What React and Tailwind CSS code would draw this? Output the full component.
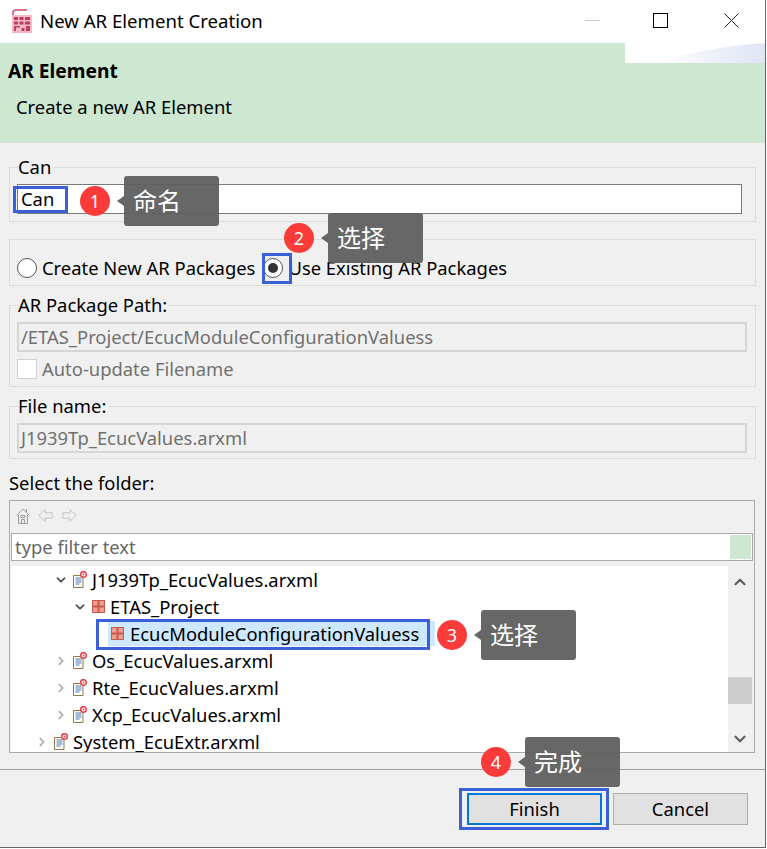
import React from 'react'
import { ChevronDown, ChevronRight, ChevronUp } from 'lucide-react'

const font = '"Noto Sans", "Noto Sans CJK SC", sans-serif'

function AppIcon() {
  return (
    <svg width="24" height="25" viewBox="0 0 24 25" className="shrink-0">
      <path d="M4 23V4q0-3 3-3h11" fill="none" stroke="#d9768e" strokeWidth="2" />
      <rect x="3" y="6" width="20" height="18" fill="#f3b9c6" />
      <path d="M5 8h4v3H5zM10.5 8h4v3h-4zM16 8h5v3h-5zM5 12.5h4v3H5zM10.5 12.5h4v3h-4zM16 12.5h5v3h-5z" fill="#c23a5c" />
      <path d="M5 17h6v1.5H7V22H5zM12.5 19h3v3h-3zM17 17h4v5h-4z" fill="#c23a5c" />
    </svg>
  )
}

function HomeIcon() {
  return (
    <svg width="14" height="16" viewBox="0 0 14 16" fill="none" stroke="#9c9c9c">
      <path d="M.5 7.5 7 1l6.5 6.500" />
      <path d="M2.5 7v8.5h9V7" fill="#ececec" />
      <path d="M5.5 15.5v-4h3v4M5 7.5h4v2H5z" />
      <path d="M10.5 1v3" />
    </svg>
  )
}

function ArrowIcon({ flip }) {
  return (
    <svg width="15" height="13" viewBox="0 0 15 13" className={flip ? 'scale-x-[-1]' : ''}>
      <path d="M.8 6.5 7 .8v3h7.2v5.400H7v3z" fill="#f0f0f0" stroke="#c4c4c4" />
    </svg>
  )
}

function FileIcon() {
  return (
    <svg width="14" height="17" viewBox="0 0 14 17" className="shrink-0">
      <path d="M.5 4.5H10v12H.5z" fill="#fff" stroke="#8d7a4a" />
      <path d="M2.5 7h6M2.5 9h6M2.5 11h6M2.5 13h4" stroke="#4f77b3" />
      <circle cx="10.5" cy="3.5" r="2.8" fill="#fff" stroke="#e8404a" strokeWidth="1.5" />
      <circle cx="10.5" cy="3.5" r="0.9" fill="#e8404a" />
    </svg>
  )
}

function PackageIcon() {
  return (
    <svg width="13" height="13" viewBox="0 0 13 13" className="shrink-0">
      <rect width="13" height="13" fill="#c9584f" />
      <path d="M1 1h4.500v4.500H1zM7.500 1H12v4.500H7.500zM1 7.500h4.500V12H1zM7.500 7.500H12V12H7.500z" fill="#ee9f90" />
    </svg>
  )
}

function Group({ label, className, children }) {
  return (
    <fieldset className={`mx-[9px] border border-[#dcdcdc] ${className}`}>
      {label && <legend className="ml-[8px] pr-[2px] text-[18.4px] leading-[22px] text-black">{label}</legend>}
      {children}
    </fieldset>
  )
}

function ReadOnlyField({ value }) {
  return (
    <div className="mx-[7px] flex h-[30px] w-[730px] items-center border-2 border-[#d6d6d6] px-[2px] text-[18.4px] text-[#707070]">
      {value}
    </div>
  )
}

function TreeRow({ indent, open, icon, label }) {
  return (
    <div className="flex h-[27px] items-center" style={{ paddingLeft: indent }}>
      <span className="flex w-[19px] shrink-0 items-center">
        {open ? <ChevronDown size={14} strokeWidth={3} className="text-[#444]" /> : <ChevronRight size={14} strokeWidth={3} className="text-[#a8a8a8]" />}
      </span>
      {icon}
      <span className="ml-[5px] text-[18.4px] leading-[27px] text-black">{label}</span>
    </div>
  )
}

function Callout({ n, text, className }) {
  return (
    <div className={`absolute flex h-[50px] items-center ${className}`}>
      <span className="flex h-[30px] w-[30px] items-center justify-center rounded-full bg-[#fb3a3a] text-[18px] text-white">{n}</span>
      <span className="ml-[7px] h-0 w-0 border-y-[5px] border-r-[7px] border-y-transparent border-r-[#666]" />
      <span className="flex h-[50px] w-[95px] items-center rounded-[3px] bg-[#5f5f5f]/95 pl-[9px] text-[24px] text-white">{text}</span>
    </div>
  )
}

function Marker({ className }) {
  return <div className={`pointer-events-none absolute border-[3px] border-[#3b5fd6] ${className}`} />
}

export default function App() {
  return (
    <div className="relative h-[849px] w-[767px] overflow-hidden bg-white" style={{ fontFamily: font }}>
      <div className="h-[848px] w-[766px] border-r border-b border-[#666] bg-[#f0f0f0]">
        <div className="flex h-[43px] items-center bg-white pl-[9px]">
          <AppIcon />
          <span className="ml-[7px] pb-[2px] text-[18.6px] text-black">New AR Element Creation</span>
          <div className="ml-auto flex items-center pb-[2px]">
            <span className="mr-[53px] h-px w-[15px] bg-[#ccc]" />
            <span className="mr-[56px] h-[15px] w-[15px] border border-black" />
            <svg width="15" height="15" viewBox="0 0 15 15" className="mr-[26px]" stroke="#222" fill="none">
              <path d="M.5.5l14 14M14.5.5l-14 14" />
            </svg>
          </div>
        </div>

        <div className="relative h-[100px] bg-[#cde7d0]">
          <svg width="140" height="20" viewBox="0 0 140 20" className="absolute top-0 right-0" preserveAspectRatio="none">
            <defs>
              <linearGradient id="swoosh" x1="0" x2="1" y1="0" y2="0">
                <stop offset="0" stopColor="#ffffff" />
                <stop offset="1" stopColor="#dfe5f6" />
              </linearGradient>
            </defs>
            <rect width="140" height="20" fill="#fff" />
            <path d="M30 20Q80 4 140 0V20Z" fill="url(#swoosh)" />
          </svg>
          <div className="pt-[15px] pl-[8px] text-[19.2px] leading-[26px] font-bold text-black">AR Element</div>
          <div className="pt-[10px] pl-[16px] text-[18.4px] leading-[26px] text-black">Create a new AR Element</div>
        </div>

        <div className="h-[13px]" />
        <Group label="Can" className="h-[66px] pt-[6px]">
          <div className="mx-[7px] flex h-[30px] w-[725px] items-center border border-[#7a7a7a] bg-white px-[3px] text-[18.4px] text-black">Can</div>
        </Group>

        <Group className="mt-[17px] flex h-[47px] items-center pl-[7px]">
          <div className="flex items-center pt-[11px]">
            <span className="h-[20px] w-[20px] rounded-full border border-[#555] bg-white" />
            <span className="ml-[5px] text-[18.4px] text-black">Create New AR Packages</span>
            <span className="ml-[8px] flex h-[20px] w-[20px] items-center justify-center rounded-full border border-[#555] bg-white">
              <span className="h-[10px] w-[10px] rounded-full bg-[#333]" />
            </span>
            <span className="ml-[5px] text-[18.4px] text-black">Use Existing AR Packages</span>
          </div>
        </Group>

        <Group label="AR Package Path:" className="mt-[8px] h-[93px] pt-[6px]">
          <ReadOnlyField value="/ETAS_Project/EcucModuleConfigurationValuess" />
          <div className="mt-[6px] ml-[7px] flex items-center">
            <span className="h-[20px] w-[20px] border border-[#d0d0d0] bg-white" />
            <span className="ml-[5px] text-[18.4px] leading-[22px] text-[#707070]">Auto-update Filename</span>
          </div>
        </Group>

        <Group label="File name:" className="mt-[8px] h-[64px] pt-[6px]">
          <ReadOnlyField value="J1939Tp_EcucValues.arxml" />
        </Group>

        <div className="mt-[12px] h-[24px] pl-[9px] text-[18.4px] leading-[24px] text-black">Select the folder:</div>

        <div className="mx-[9px] mt-[5px] h-[253px] w-[746px] border border-[#ababab] px-px">
          <div className="flex h-[32px] items-center pb-[3px] pl-[5px]">
            <HomeIcon />
            <span className="ml-[8px]"><ArrowIcon /></span>
            <span className="ml-[9px]"><ArrowIcon flip /></span>
          </div>
          <div className="flex h-[28px] w-[742px] items-center justify-between border border-[#ababab] bg-white pr-px pl-[3px] text-[18.4px] text-[#666]">
            type filter text
            <span className="h-[24px] w-[21px] bg-[#cde7d0]" />
          </div>
          <div className="mt-[5px] flex h-[186px] w-[741px] overflow-hidden">
            <div className="w-[717px] bg-white">
              <TreeRow indent={43} open icon={<FileIcon />} label="J1939Tp_EcucValues.arxml" />
              <TreeRow indent={62} open icon={<PackageIcon />} label="ETAS_Project" />
              <div className="flex h-[27px] items-center pl-[97px]">
                <div className="flex h-[25px] w-[327px] items-center bg-[#cde8ff] pl-[3px]">
                  <PackageIcon />
                  <span className="ml-[6px] text-[18.4px] text-black">EcucModuleConfigurationValuess</span>
                </div>
              </div>
              <TreeRow indent={43} icon={<FileIcon />} label="Os_EcucValues.arxml" />
              <TreeRow indent={43} icon={<FileIcon />} label="Rte_EcucValues.arxml" />
              <TreeRow indent={43} icon={<FileIcon />} label="Xcp_EcucValues.arxml" />
              <TreeRow indent={24} icon={<FileIcon />} label="System_EcuExtr.arxml" />
            </div>
            <div className="flex w-[24px] flex-col items-center bg-[#f0f0f0] text-[#606060]">
              <ChevronUp size={18} strokeWidth={3} className="mt-[7px]" />
              <div className="mt-[86px] h-[27px] w-[24px] bg-[#cdcdcd]" />
              <ChevronDown size={18} strokeWidth={3} className="mt-[26px]" />
            </div>
          </div>
        </div>

        <div className="mt-[16px] h-px bg-[#a0a0a0]" />
        <div className="flex justify-end gap-[11px] pt-[23px] pr-[17px]">
          <button className="h-[32px] w-[135px] border-2 border-[#0078d7] bg-[#e1e1e1] text-[18.4px] text-black">Finish</button>
          <button className="h-[32px] w-[135px] border border-[#adadad] bg-[#e1e1e1] text-[18.4px] text-black">Cancel</button>
        </div>
      </div>

      <Marker className="top-[186px] left-[13px] h-[27px] w-[55px]" />
      <Marker className="top-[253px] left-[262px] h-[31px] w-[30px]" />
      <Marker className="top-[619px] left-[96px] h-[31px] w-[334px]" />
      <Marker className="top-[788px] left-[459px] h-[42px] w-[150px]" />

      <Callout n="1" text="命名" className="top-[176px] left-[80px]" />
      <Callout n="2" text="选择" className="top-[213px] left-[284px]" />
      <Callout n="3" text="选择" className="top-[610px] left-[437px]" />
      <Callout n="4" text="完成" className="top-[737px] left-[481px]" />
    </div>
  )
}
